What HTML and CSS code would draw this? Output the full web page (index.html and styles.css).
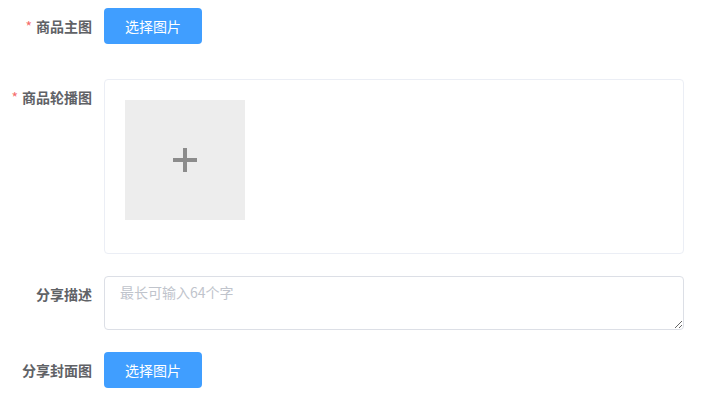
FILE: index.html
```html
<!DOCTYPE html>
<html lang="zh">
<head>
<meta charset="utf-8">
<link rel="stylesheet" href="styles.css">
</head>
<body>
<form class="form">
  <div class="item item-first">
    <label class="label"><span class="req">*</span>商品主图</label>
    <div class="content"><button type="button" class="btn">选择图片</button></div>
  </div>
  <div class="item">
    <label class="label"><span class="req">*</span>商品轮播图</label>
    <div class="content">
      <div class="upload-box">
        <div class="upload-card">
          <svg width="24" height="24" viewBox="0 0 24 24"><rect x="10" y="0" width="4" height="24" fill="#8c8c8c"/><rect x="0" y="10" width="24" height="4" fill="#8c8c8c"/></svg>
        </div>
      </div>
    </div>
  </div>
  <div class="item">
    <label class="label">分享描述</label>
    <div class="content"><textarea class="textarea" placeholder="最长可输入64个字"></textarea></div>
  </div>
  <div class="item">
    <label class="label">分享封面图</label>
    <div class="content"><button type="button" class="btn">选择图片</button></div>
  </div>
</form>
</body>
</html>
```
FILE: styles.css
```css
html, body {
  margin: 0;
  padding: 0;
  background: #fff;
  font-family: "Noto Sans CJK SC", "Noto Sans", sans-serif;
}
.form {
  padding: 8px 25px 0 0;
  width: 684px;
}
.item {
  display: flex;
  margin-bottom: 22px;
}
.item-first {
  margin-bottom: 35px;
}
.label {
  width: 92px;
  padding-right: 12px;
  flex-shrink: 0;
  text-align: right;
  font-size: 14px;
  font-weight: bold;
  color: #606266;
  line-height: 36px;
  white-space: nowrap;
}
.req {
  color: #f56c6c;
  margin-right: 4px;
  font-weight: normal;
}
.content {
  flex: 1;
}
.btn {
  display: block;
  height: 36px;
  width: 98px;
  padding: 0;
  border: none;
  border-radius: 4px;
  background: #409eff;
  color: #fff;
  font-family: inherit;
  font-size: 14px;
  line-height: 36px;
}
.upload-box {
  box-sizing: border-box;
  width: 580px;
  height: 175px;
  border: 1px solid #ebeef5;
  border-radius: 4px;
  padding: 20px;
}
.upload-card {
  width: 120px;
  height: 120px;
  background: #ededed;
  display: flex;
  align-items: center;
  justify-content: center;
}
.textarea {
  display: block;
  box-sizing: border-box;
  width: 580px;
  height: 54px;
  border: 1px solid #dcdfe6;
  border-radius: 4px;
  padding: 5px 15px;
  font-family: inherit;
  font-size: 14px;
  line-height: 1.5;
  color: #606266;
  resize: vertical;
  outline: none;
}
.textarea::placeholder {
  color: #c0c4cc;
}
```
